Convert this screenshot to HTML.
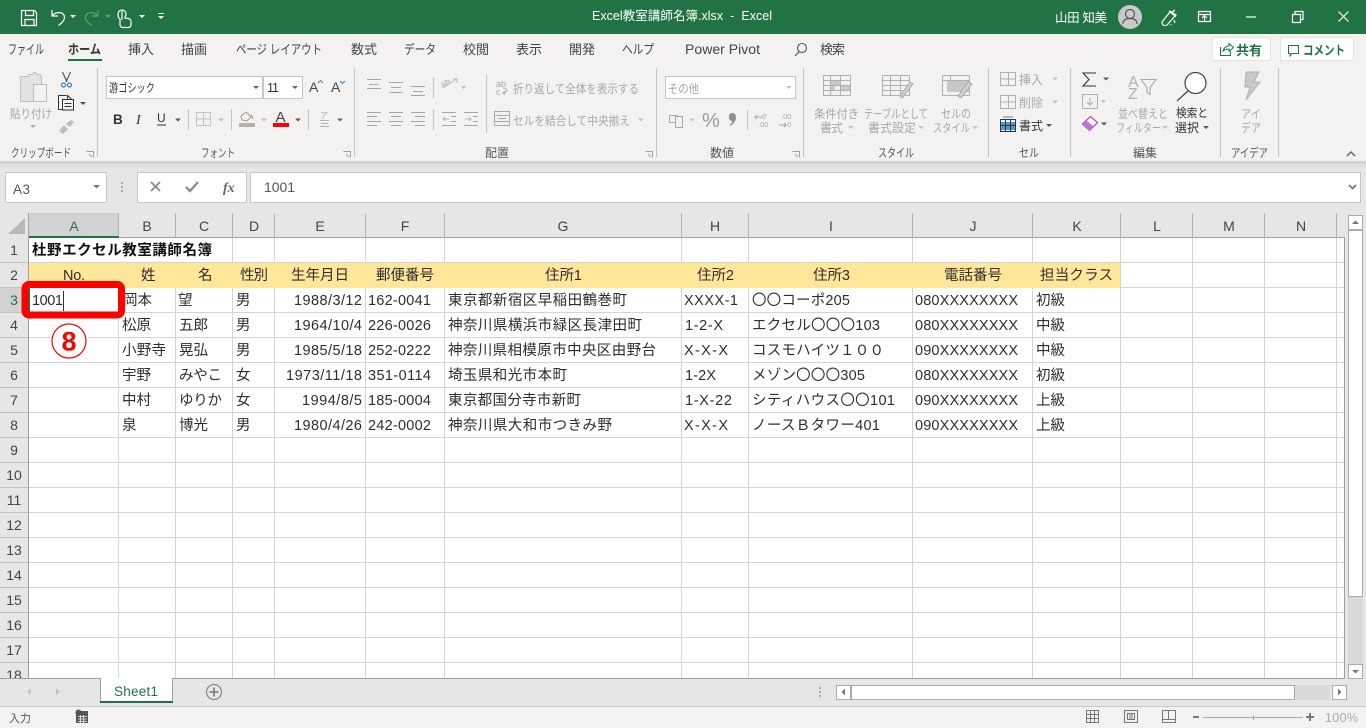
<!DOCTYPE html>
<html lang="ja"><head><meta charset="utf-8"><title>Excel</title>
<style>
html,body{margin:0;padding:0;width:1366px;height:728px;overflow:hidden;background:#fff}
svg{display:block;position:absolute;left:0;top:0}
text{font-family:"Liberation Sans","Noto Sans CJK JP",sans-serif;white-space:pre}
.c text,.c{font-size:14.5px;fill:#2e2e2e}
.t{font-size:13px;fill:#444}
.r{font-size:12px;fill:#a8a8a8}
.d{font-size:12px;fill:#444}
.g{font-size:12px;fill:#555}
.h{font-size:14px;fill:#444;text-anchor:middle}
.w{font-size:12.5px;fill:#fff}
.ln{stroke:#a6a6a6;stroke-width:1;fill:none}
.sep{stroke:#c4c4c4;stroke-width:1}
</style></head><body>
<svg width="1366" height="728" viewBox="0 0 1366 728" xmlns="http://www.w3.org/2000/svg">
<!-- backgrounds -->
<rect width="1366" height="728" fill="#e6e6e6"/>
<rect width="1366" height="34" fill="#217346"/>
<rect y="34" width="1366" height="128" fill="#f3f2f1"/>
<rect y="161" width="1366" height="3" fill="#d4d4d4"/>
<rect y="164" width="1366" height="3" fill="#e0e0e0"/>

<!-- title bar -->
<g fill="none" stroke="#fff" stroke-width="1.2">
<path d="M21.5 10.5h13l2 2v13h-15z"/><path d="M25.5 10.5v5h8v-5M25 25.500v-6h9v6"/>
<path d="M52 10v6h6M52.500 15.500c3-4 11-4 12 1 .6 3-2 6-6 9"/>
<path stroke="#5f9e7d" d="M98 10v6h-6M97.500 15.500c-3-4-11-4-12 1-.6 3 2 6 6 9"/>
<path d="M120 25v-6c-2-1-2-3-2-5a4 4 0 0 1 8 0c0 1 0 2-1 3l0 1 3 .5c2 .5 3 1 3 3v3c0 2-1 3-3 3h-5c-2 0-3-1-3-3z"/>
<path d="M122 11v9"/>
</g>
<g fill="#fff"><path d="M70 15h6l-3 3zM139 15h6l-3 3zM158 16h6l-3 3zM158 13h6v1h-6z"/></g>
<path d="M105 15h6l-3 3z" fill="#5f9e7d"/>
<text class="w" x="592" y="20" textLength="180">Excel教室講師名簿.xlsx  -  Excel</text>
<text class="w" x="1055" y="22" textLength="52">山田 知美</text>
<circle cx="1130" cy="17" r="12" fill="#c9c9c9"/>
<circle cx="1130" cy="14" r="4.500" fill="none" stroke="#555" stroke-width="1.2"/>
<path d="M1123 24c0-4 3-5.500 7-5.500s7 1.500 7 5.500" fill="none" stroke="#555" stroke-width="1.200"/>
<g fill="none" stroke="#fff" stroke-width="1.2">
<path d="M1162 22l8-10 5 4-8 9c-2 1-5 1-5-3zM1169 13l1-2 6 4-1 2M1172 12l3-2M1174 20l1 3M1171 24l0 1"/>
<path d="M1198.500 11.500h12v10h-12zM1198.500 14.500h12M1204.500 21v-5M1202 18l2.500-2.500 2.500 2.500"/>
<path d="M1246 17h10" />
<path d="M1292.500 14.500h8v8h-8zM1295 14v-2.500h8v8h-2.500"/>
<path d="M1338.500 11.500l10 10M1348.500 11.500l-10 10"/>
</g>

<!-- tabs -->
<text class="t" x="8" y="54" textLength="36" lengthAdjust="spacingAndGlyphs">ファイル</text>
<text class="t" x="68" y="54" textLength="33" lengthAdjust="spacingAndGlyphs" font-weight="bold" style="fill:#333">ホーム</text>
<rect x="68" y="59" width="34" height="2" fill="#217346"/>
<text class="t" x="128" y="54" textLength="26">挿入</text>
<text class="t" x="181" y="54" textLength="26">描画</text>
<text class="t" x="236" y="54" textLength="86" lengthAdjust="spacingAndGlyphs">ページ レイアウト</text>
<text class="t" x="351" y="54" textLength="26">数式</text>
<text class="t" x="404" y="54" textLength="32" lengthAdjust="spacingAndGlyphs">データ</text>
<text class="t" x="463" y="54" textLength="26">校閲</text>
<text class="t" x="516" y="54" textLength="26">表示</text>
<text class="t" x="569" y="54" textLength="26">開発</text>
<text class="t" x="622" y="54" textLength="32" lengthAdjust="spacingAndGlyphs">ヘルプ</text>
<text class="t" x="685" y="54" textLength="75" lengthAdjust="spacingAndGlyphs" style="font-size:13.5px">Power Pivot</text>
<circle cx="802" cy="48" r="4.500" fill="none" stroke="#555" stroke-width="1.1"/><path d="M799 52l-4 4" stroke="#555" stroke-width="1.200"/>
<text class="t" x="820" y="54" textLength="25">検索</text>
<rect x="1212.500" y="37.500" width="58" height="23" rx="1" fill="#fff" stroke="#e4e2e0"/>
<rect x="1280.500" y="37.500" width="73" height="23" rx="1" fill="#fff" stroke="#e4e2e0"/>
<path d="M1220.500 47v8.500h10v-4M1223 51c1-3 3-5 6-5v-2.500l4.500 4-4.500 4V49c-2 0-4 .5-6 2z" fill="none" stroke="#217346"/>
<text x="1236" y="55" font-size="13" font-weight="bold" fill="#217346" textLength="26">共有</text>
<path d="M1288.500 45.500h10v8h-6.500l-2 2.500v-2.500h-1.500z" fill="none" stroke="#217346"/>
<text x="1303" y="55" font-size="13" font-weight="bold" fill="#217346" textLength="42" lengthAdjust="spacingAndGlyphs">コメント</text>

<!-- group separators -->
<g class="sep"><path d="M97.500 68v89M354.500 68v89M656.500 68v89M803.500 68v89M988.500 68v89M1070.500 68v89M1220.500 68v89M1278.500 68v89"/></g>

<!-- group labels -->
<text class="g" x="11" y="157" textLength="60" lengthAdjust="spacingAndGlyphs">クリップボード</text>
<text class="g" x="201" y="157" textLength="34" lengthAdjust="spacingAndGlyphs">フォント</text>
<text class="g" x="485" y="157" textLength="24">配置</text>
<text class="g" x="710" y="157" textLength="24">数値</text>
<text class="g" x="878" y="157" textLength="36" lengthAdjust="spacingAndGlyphs">スタイル</text>
<text class="g" x="1019" y="157" textLength="20" lengthAdjust="spacingAndGlyphs">セル</text>
<text class="g" x="1133" y="157" textLength="24">編集</text>
<text class="g" x="1231" y="157" textLength="37" lengthAdjust="spacingAndGlyphs">アイデア</text>
<g fill="none" stroke="#a0a0a0"><path d="M86.500 151.500h7v6M89 154l3 3M343.500 151.500h7v6M346 154l3 3M645.500 151.500h7v6M648 154l3 3M792.500 151.500h7v6M795 154l3 3"/></g>
<path d="M1347 156l4-4 4 4" fill="none" stroke="#666" stroke-width="1.500"/>

<!-- clipboard -->
<path d="M20.500 76.500h8v-2h4l1-2h2l1 2h4v2h1v8h-3v17h-18z" fill="#e2e2e2" stroke="#c2c2c2"/>
<rect x="33.500" y="84.500" width="13" height="17" fill="#f3f2f1" stroke="#bcbcbc"/>
<text class="r" x="10" y="118" textLength="42" lengthAdjust="spacingAndGlyphs">貼り付け</text>
<path d="M30 125h6l-3 3z" fill="#aaa"/>
<g fill="none" stroke="#444"><path d="M62.500 72l4.500 10M70.500 72l-4.500 10"/></g>
<g fill="none" stroke="#2e86d0" stroke-width="1.200"><circle cx="63.500" cy="85" r="2"/><circle cx="69.500" cy="85" r="2"/></g>
<g fill="none" stroke="#333"><path d="M62 109.500h-3.500v-14h8"/><path d="M62.500 99.500h5l6 0v10.500h-11zM67.500 99.500v-4l5 4.500M64.500 103.500h7M64.500 106.500h7" /></g>
<path d="M80 102h6l-3 3z" fill="#555"/>
<path d="M59 131l5-6 4 4-5 5zM66 124l5-4 3 2-4 5z" fill="#bdbdbd"/>

<!-- font -->
<rect x="106.500" y="76.500" width="156" height="22" fill="#fff" stroke="#c6c6c6"/>
<rect x="263.500" y="76.500" width="39" height="22" fill="#fff" stroke="#c6c6c6"/>
<text x="109" y="92" font-size="12" fill="#333" textLength="46" lengthAdjust="spacingAndGlyphs">游ゴシック</text>
<text x="267" y="92" font-size="12.500" fill="#333" textLength="12">11</text>
<path d="M253 86h6l-3 3zM292 86h6l-3 3z" fill="#666"/>
<text x="309" y="92" font-size="14" fill="#444">A</text><path d="M318 83l2.500-2.500 2.500 2.500" fill="none" stroke="#2e86d0"/>
<text x="331" y="92" font-size="14" fill="#444">A</text><path d="M340 81l2.500 2.500 2.500-2.500" fill="none" stroke="#2e86d0"/>
<text x="113" y="124" font-size="13.500" font-weight="bold" fill="#333">B</text>
<text x="136" y="124" font-size="14" font-style="italic" fill="#333" style="font-family:'Liberation Serif',serif">I</text>
<text x="157" y="122" font-size="12" fill="#333">U</text><rect x="157" y="124.500" width="9" height="1" fill="#333"/>
<path d="M175 118.500h6l-3 3z" fill="#555"/>
<path class="sep" d="M188.500 109v21M231.500 109v21M308.500 109v21"/>
<g fill="none" stroke="#c4c4c4"><path d="M196.500 112.500h14v13h-14zM203.500 112.500v13M196.500 119h14"/></g>
<path d="M218 118.500h6l-3 3z" fill="#c0c0c0"/>
<path d="M241 116l5-4 5 5-4 4-5-1zM251 115c1 1 2 3 1.500 4" fill="none" stroke="#999"/>
<rect x="239" y="123" width="16" height="4" fill="#b4b0aa"/>
<path d="M261 118.500h6l-3 3z" fill="#c0c0c0"/>
<text x="275.500" y="122" font-size="15" fill="#444">A</text>
<rect x="273" y="123" width="16" height="4" fill="#f00"/>
<path d="M295 118.500h6l-3 3z" fill="#555"/>
<text x="320" y="118" font-size="8" fill="#b0b0b0">ア</text>
<g stroke="#b0b0b0"><path d="M320 120.500h9M321 123.500h7M320 126.500h9"/></g>
<path d="M337 118.500h6l-3 3z" fill="#666"/>

<!-- alignment -->
<g class="ln"><path d="M367 79.500h14M369 84.500h10M367 88.500h14M389 82.500h14M391 87.500h10M389 92.500h14M411 86.500h14M413 91.500h10M411 95.500h14"/>
<path d="M367 112.500h14M367 116.500h10M367 121.500h14M367 125.500h10M389 112.500h14M391 116.500h10M389 121.500h14M391 125.500h10M411 112.500h14M415 116.500h10M411 121.500h14M415 125.500h10"/>
<path d="M442 112.500h14M451 116.500h5M451 121.500h5M442 125.500h14M464 112.500h14M473 116.500h5M473 121.500h5M464 125.500h14"/></g>
<path d="M449 119h-6M445 117l-2 2 2 2M465 119h6M469 117l2 2-2 2" fill="none" stroke="#b8b8b8"/>
<path class="sep" d="M433.500 77v21M433.500 109v21M486.500 74v59"/>
<path d="M443 87l14-8M453 79h4v4" fill="none" stroke="#bbb"/><text x="441" y="86" font-size="9" fill="#aaa" transform="rotate(-30 446 84)">ab</text>
<path d="M461 86h5l-2.500 3z" fill="#bbb"/>
<text x="496" y="87" font-size="9" fill="#a8a8a8">ab</text><text x="496" y="95" font-size="9" fill="#a8a8a8">c</text><path d="M503 88c5 0 5 5 0 5M505 91l-2 2 2 2" fill="none" stroke="#aaa"/>
<text class="r" x="513" y="93" textLength="126" lengthAdjust="spacingAndGlyphs">折り返して全体を表示する</text>
<rect x="494.500" y="111.500" width="15" height="14" fill="none" stroke="#aaa"/><path d="M494 115.500h15M494 121.500h15M498 118.500h8" fill="none" stroke="#aaa"/>
<text class="r" x="513" y="125" textLength="117" lengthAdjust="spacingAndGlyphs">セルを結合して中央揃え</text>
<path d="M638 118.500h6l-3 3z" fill="#c4c4c4"/>

<!-- number -->
<rect x="665.500" y="76.500" width="130" height="22" fill="#fff" stroke="#c6c6c6"/>
<text class="r" x="668" y="93" textLength="31" lengthAdjust="spacingAndGlyphs">その他</text>
<path d="M786 86h6l-3 3z" fill="#c4c4c4"/>
<rect x="669.500" y="115.500" width="8" height="7" fill="none" stroke="#aaa"/><rect x="675.500" y="116.500" width="7" height="11" fill="#f3f2f1" stroke="#aaa"/>
<path d="M689 118.500h6l-3 3z" fill="#c4c4c4"/>
<text x="702" y="127" font-size="20" fill="#9a9a9a">%</text>
<path d="M732 113c2.500 0 4 1.500 4 4 0 4-2.500 7-6 9l-.5-.8c1.500-1 2.500-2.500 2.800-4.200-2 0-3.300-1.500-3.300-4s1-4 3-4z" fill="#8e8e8e"/>
<path class="sep" d="M747.500 110v20"/>
<text x="760" y="119" font-size="7.500" fill="#aaa">.0</text><text x="758" y="127" font-size="7.500" fill="#aaa">.00</text><path d="M762 117h-7M757 115l-2 2 2 2" fill="none" stroke="#aaa"/>
<text x="781" y="119" font-size="7.500" fill="#aaa">.00</text><text x="785" y="127" font-size="7.500" fill="#aaa">.0</text><path d="M779 125h7M784 123l2 2-2 2" fill="none" stroke="#aaa"/>

<!-- styles -->
<g stroke="#b0b0b0" fill="#f3f2f1"><rect x="823.500" y="75.500" width="27" height="20"/></g>
<path d="M830 80h11v5h-6v5h-5zM841 85h9v5h-9z" fill="#c8c8c8"/>
<path d="M823.500 80.500h27M823.500 85.500h27M823.500 90.500h27M830.500 75v21M840.500 75v21" fill="none" stroke="#b0b0b0"/>
<text class="r" x="814" y="118" textLength="45" lengthAdjust="spacingAndGlyphs">条件付き</text><text class="r" x="820" y="132" textLength="23">書式</text><path d="M848 126h6l-3 3z" fill="#c4c4c4"/>
<g fill="none" stroke="#b0b0b0"><rect x="882.500" y="75.500" width="27" height="20"/><path d="M882.500 80.500h27M882.500 85.500h27M882.500 90.500h27M890.500 75v21M900.500 75v21"/></g>
<path d="M900 96l10-14 3 2-11 14z" fill="#d0d0d0" stroke="#aaa"/>
<text class="r" x="864" y="118" textLength="64" lengthAdjust="spacingAndGlyphs">テーブルとして</text><text class="r" x="868" y="132" textLength="48">書式設定</text><path d="M918 126h6l-3 3z" fill="#c4c4c4"/>
<g fill="none" stroke="#b0b0b0"><rect x="942.500" y="75.500" width="27" height="20"/><path d="M942.500 80.500h27M950.500 75v6"/></g>
<rect x="947" y="81" width="22" height="11" fill="#c8c8c8"/>
<path d="M958 96l10-14 4 2-11 14z" fill="#d0d0d0" stroke="#aaa"/>
<text class="r" x="941" y="118" textLength="30" lengthAdjust="spacingAndGlyphs">セルの</text><text class="r" x="933" y="132" textLength="37" lengthAdjust="spacingAndGlyphs">スタイル</text><path d="M972 126h6l-3 3z" fill="#c4c4c4"/>

<!-- cells -->
<g fill="none" stroke="#b0b0b0"><rect x="1000.500" y="72.500" width="15" height="13"/><path d="M1008.500 72v14M1000 79h16"/><rect x="1000.500" y="95.500" width="15" height="13"/><path d="M1008.500 95v14M1000 102h16"/></g>
<text class="r" x="1019" y="84" textLength="24">挿入</text><text class="r" x="1019" y="107" textLength="24">削除</text>
<path d="M1052 77.500h6l-3 3zM1052 100.500h6l-3 3z" fill="#c4c4c4"/>
<rect x="1001" y="122" width="14" height="8" fill="#4a9ad8"/>
<g fill="none" stroke="#333"><rect x="1000.500" y="119.500" width="15" height="12"/><path d="M1000 125.500h16M1005.500 119v13M1010.500 119v13"/></g>
<path d="M1003 117h10" stroke="#2e86d0"/>
<text class="d" x="1019" y="130" textLength="24" style="fill:#333">書式</text>
<path d="M1046 124h6l-3 3z" fill="#555"/>

<!-- editing -->
<path d="M1096 73h-13l6 6.500-6 6.500h13" fill="none" stroke="#333" stroke-width="1.100"/>
<path d="M1103 77.500h6l-3 3z" fill="#555"/>
<rect x="1082.500" y="94.500" width="15" height="14" fill="none" stroke="#b0b0b0"/><path d="M1090 98v7M1087 102l3 3 3-3" fill="none" stroke="#aaa"/>
<path d="M1101 100h5l-2.500 3z" fill="#c4c4c4"/>
<path d="M1082.500 124l8-7.500 7 6-8 8z" fill="#fff" stroke="#a94bb8" stroke-width="1.200"/><path d="M1082.500 124l4-3.500 7 6-4 4.500z" fill="#c86cd6"/>
<path d="M1101 122.500h6l-3 3z" fill="#555"/>
<text x="1128" y="87" font-size="16" fill="#b0b0b0">A</text><text x="1128" y="99" font-size="16" fill="#b0b0b0">Z</text>
<path d="M1141 79.500h15l-6 8v7l-3-2v-5z" fill="none" stroke="#a8a8a8" stroke-width="1.100"/>
<text class="r" x="1118" y="118" textLength="50" lengthAdjust="spacingAndGlyphs">並べ替えと</text><text class="r" x="1116" y="132" textLength="45" lengthAdjust="spacingAndGlyphs">フィルター</text><path d="M1162 126h6l-3 3z" fill="#c4c4c4"/>
<circle cx="1195.500" cy="83" r="10.500" fill="#fff" stroke="#444" stroke-width="1.200"/><path d="M1188 91l-11 10" stroke="#444" stroke-width="1.200"/>
<text class="d" x="1176" y="117" textLength="32" lengthAdjust="spacingAndGlyphs" style="fill:#333">検索と</text><text class="d" x="1175" y="132" textLength="24" style="fill:#333">選択</text><path d="M1203 126h6l-3 3z" fill="#555"/>
<!-- ideas -->
<path d="M1246 72h13l-5 10h6l-14 18 4-13h-5z" fill="#c8c8c8" stroke="#b0b0b0"/>
<text class="r" x="1241" y="118" textLength="20" lengthAdjust="spacingAndGlyphs">アイ</text><text class="r" x="1241" y="132" textLength="20" lengthAdjust="spacingAndGlyphs">デア</text>

<!-- formula bar -->
<rect x="5.500" y="172.500" width="101" height="30" fill="#fff" stroke="#c6c6c6"/>
<text x="13" y="194" font-size="13.500" fill="#555" textLength="17">A3</text>
<path d="M93 185h7l-3.500 3.500z" fill="#777"/>
<g fill="#aaa"><rect x="121" y="182" width="2" height="2"/><rect x="121" y="186" width="2" height="2"/><rect x="121" y="190" width="2" height="2"/></g>
<rect x="137.500" y="172.500" width="109" height="30" fill="#fff" stroke="#c6c6c6"/>
<rect x="250.500" y="172.500" width="1110" height="30" fill="#fff" stroke="#c6c6c6"/>
<path d="M151 182l9 9M160 182l-9 9" stroke="#888" stroke-width="1.800" fill="none"/>
<path d="M186 187l4 4 8-9" stroke="#888" stroke-width="2.200" fill="none"/>
<text x="223" y="192" font-size="14" font-style="italic" font-weight="bold" fill="#666" style="font-family:'Liberation Serif',serif">fx</text>
<text x="264" y="192" font-size="14" fill="#555" textLength="31">1001</text>
<path d="M1349 185l3.500 3.500 3.500-3.500" fill="none" stroke="#777" stroke-width="1.800"/>

<!-- sheet -->
<rect x="0" y="213" width="1345" height="25" fill="#e6e6e6"/>
<rect x="29" y="238" width="1315" height="440" fill="#fff"/>
<rect x="0" y="238" width="29" height="440" fill="#e6e6e6"/>
<rect x="29" y="213" width="90" height="24" fill="#d2d2d2"/>
<rect x="0" y="288" width="28" height="25" fill="#d2d2d2"/>
<path d="M8 234l17-16v16z" fill="#b8b8b8"/>
<g stroke="#d4d4d4" fill="none">
<path d="M29 262.500H1344M29 287.500H1344M29 312.500H1344M29 337.500H1344M29 362.500H1344M29 387.500H1344M29 412.500H1344M29 437.500H1344M29 462.500H1344M29 487.500H1344M29 512.500H1344M29 537.500H1344M29 562.500H1344M29 587.500H1344M29 612.500H1344M29 637.500H1344M29 662.500H1344"/>
<path d="M232.500 238V263M274.500 238V263M365.500 238V263M444.500 238V263M681.500 238V263M748.500 238V263M912.500 238V263M1032.500 238V263M1120.500 238V678M1192.500 238V678M1264.500 238V678M1336.500 238V678"/>
<path d="M118.500 287V678M175.500 287V678M232.500 287V678M274.500 287V678M365.500 287V678M444.500 287V678M681.500 287V678M748.500 287V678M912.500 287V678M1032.500 287V678"/>
</g>
<rect x="29" y="263" width="1091" height="25" fill="#ffe699"/>
<g stroke="#c0c0c0" fill="none"><path d="M0 262.500h28M0 287.500h28M0 312.500h28M0 337.500h28M0 362.500h28M0 387.500h28M0 412.500h28M0 437.500h28M0 462.500h28M0 487.500h28M0 512.500h28M0 537.500h28M0 562.500h28M0 587.500h28M0 612.500h28M0 637.500h28M0 662.500h28"/></g>
<g stroke="#b4b4b4" fill="none"><path d="M118.500 213v24M175.500 213v24M232.500 213v24M274.500 213v24M365.500 213v24M444.500 213v24M681.500 213v24M748.500 213v24M912.500 213v24M1032.500 213v24M1120.500 213v24M1192.500 213v24M1264.500 213v24M1336.500 213v24"/></g>
<path d="M28 237.500H1345" stroke="#a0a0a0"/>
<path d="M28.500 213V678" stroke="#a0a0a0"/>
<path d="M1344.500 237V678" stroke="#a0a0a0"/>
<rect x="29" y="236" width="90" height="2" fill="#217346"/>
<rect x="28" y="288" width="2" height="25" fill="#217346"/>

<g class="h">
<text x="74" y="231" style="fill:#217346">A</text><text x="147" y="231">B</text><text x="204" y="231">C</text><text x="254" y="231">D</text><text x="320" y="231">E</text><text x="405" y="231">F</text><text x="563" y="231">G</text><text x="715" y="231">H</text><text x="831" y="231">I</text><text x="973" y="231">J</text><text x="1077" y="231">K</text><text x="1157" y="231">L</text><text x="1229" y="231">M</text><text x="1301" y="231">N</text>
</g>
<g class="h">
<text x="14" y="255">1</text><text x="14" y="280">2</text><text x="14" y="305" style="fill:#217346">3</text><text x="14" y="330">4</text><text x="14" y="355">5</text><text x="14" y="380">6</text><text x="14" y="405">7</text><text x="14" y="430">8</text><text x="14" y="455">9</text><text x="14" y="480">10</text><text x="14" y="505">11</text><text x="14" y="530">12</text><text x="14" y="555">13</text><text x="14" y="580">14</text><text x="14" y="605">15</text><text x="14" y="630">16</text><text x="14" y="655">17</text><text x="14" y="680">18</text>
</g>

<g class="c">
<text x="32" y="255" font-weight="bold" textLength="180" style="fill:#111">杜野エクセル教室講師名簿</text>
<text x="63" y="280" textLength="22">No.</text><text x="141" y="280" textLength="14">姓</text><text x="198" y="280" textLength="14">名</text><text x="240" y="280" textLength="28">性別</text><text x="291" y="280" textLength="58">生年月日</text><text x="376" y="280" textLength="58">郵便番号</text><text x="545" y="280" textLength="37">住所1</text><text x="697" y="280" textLength="37">住所2</text><text x="813" y="280" textLength="37">住所3</text><text x="944" y="280" textLength="58">電話番号</text><text x="1040" y="280" textLength="73">担当クラス</text>

<text x="123" y="305" textLength="29">岡本</text><text x="178" y="305" textLength="15">望</text><text x="236" y="305" textLength="14">男</text><text x="294" y="305" textLength="68">1988/3/12</text><text x="368" y="305" textLength="63">162-0041</text><text x="448" y="305" textLength="179">東京都新宿区早稲田鶴巻町</text><text x="684" y="305" textLength="54">XXXX-1</text><text x="752" y="305" textLength="98">〇〇コーポ205</text><text x="915" y="305" textLength="103">080XXXXXXXX</text><text x="1036" y="305" textLength="29">初級</text>

<text x="122" y="330" textLength="29">松原</text><text x="179" y="330" textLength="29">五郎</text><text x="236" y="330" textLength="14">男</text><text x="294" y="330" textLength="68">1964/10/4</text><text x="368" y="330" textLength="63">226-0026</text><text x="448" y="330" textLength="194">神奈川県横浜市緑区長津田町</text><text x="685" y="330" textLength="38">1-2-X</text><text x="752" y="330" textLength="128">エクセル〇〇〇103</text><text x="915" y="330" textLength="103">080XXXXXXXX</text><text x="1036" y="330" textLength="29">中級</text>

<text x="122" y="355" textLength="44">小野寺</text><text x="179" y="355" textLength="29">晃弘</text><text x="236" y="355" textLength="14">男</text><text x="294" y="355" textLength="68">1985/5/18</text><text x="368" y="355" textLength="63">252-0222</text><text x="448" y="355" textLength="208">神奈川県相模原市中央区由野台</text><text x="684" y="355" textLength="44">X-X-X</text><text x="752" y="355" textLength="132">コスモハイツ１００</text><text x="915" y="355" textLength="103">090XXXXXXXX</text><text x="1036" y="355" textLength="29">中級</text>

<text x="122" y="380" textLength="29">宇野</text><text x="179" y="380" textLength="43">みやこ</text><text x="236" y="380" textLength="14">女</text><text x="286" y="380" textLength="76">1973/11/18</text><text x="368" y="380" textLength="63">351-0114</text><text x="448" y="380" textLength="119">埼玉県和光市本町</text><text x="685" y="380" textLength="31">1-2X</text><text x="752" y="380" textLength="113">メゾン〇〇〇305</text><text x="915" y="380" textLength="103">080XXXXXXXX</text><text x="1036" y="380" textLength="29">初級</text>

<text x="122" y="405" textLength="29">中村</text><text x="179" y="405" textLength="43">ゆりか</text><text x="236" y="405" textLength="14">女</text><text x="302" y="405" textLength="60">1994/8/5</text><text x="368" y="405" textLength="63">185-0004</text><text x="448" y="405" textLength="133">東京都国分寺市新町</text><text x="685" y="405" textLength="47">1-X-22</text><text x="752" y="405" textLength="143">シティハウス〇〇101</text><text x="915" y="405" textLength="103">090XXXXXXXX</text><text x="1036" y="405" textLength="29">上級</text>

<text x="122" y="430" textLength="14">泉</text><text x="179" y="430" textLength="29">博光</text><text x="236" y="430" textLength="14">男</text><text x="294" y="430" textLength="68">1980/4/26</text><text x="368" y="430" textLength="63">242-0002</text><text x="448" y="430" textLength="164">神奈川県大和市つきみ野</text><text x="684" y="430" textLength="44">X-X-X</text><text x="752" y="430" textLength="128">ノースＢタワー401</text><text x="915" y="430" textLength="103">090XXXXXXXX</text><text x="1036" y="430" textLength="29">上級</text>

<text x="32" y="305" textLength="31">1001</text>
</g>
<path d="M63.500 291v20" stroke="#333"/>

<!-- annotation -->
<rect x="25" y="284.500" width="96.500" height="30.500" rx="4" fill="none" stroke="#ff0000" stroke-width="7"/>
<circle cx="69" cy="341" r="19" fill="#fff" opacity=".9"/>
<circle cx="69" cy="341" r="17" fill="#fff" stroke="#f00" stroke-width="1.200"/>
<text x="69" y="350.500" font-size="27" font-weight="bold" fill="#f00" text-anchor="middle">8</text>

<!-- scrollbars -->
<rect x="1345" y="213" width="21" height="493" fill="#e6e6e6"/>
<rect x="1348" y="215" width="15" height="450" fill="#dadada"/>
<rect x="1348.500" y="215.500" width="14" height="14" fill="#fff" stroke="#ababab"/>
<path d="M1352 224h7l-3.500-3.500z" fill="#777"/>
<rect x="1348.500" y="230.500" width="14" height="366" fill="#fff" stroke="#ababab"/>
<rect x="1348.500" y="664.500" width="14" height="14" fill="#fff" stroke="#ababab"/>
<path d="M1352 670h7l-3.500 3.500z" fill="#777"/>

<!-- tab bar -->
<rect x="0" y="678" width="1345" height="28" fill="#e6e6e6"/>
<path d="M0 678.500H1345" stroke="#a0a0a0"/>
<path d="M100.500 678.500V702" stroke="#a0a0a0"/><path d="M172.500 678.500V702" stroke="#a0a0a0"/>
<rect x="101" y="678" width="71" height="24" fill="#fff"/>
<rect x="100" y="701" width="73" height="2" fill="#217346"/>
<text x="114" y="696" font-size="13.500" fill="#217346" textLength="44">Sheet1</text>
<path d="M31 688l-4 3.500 4 3.500zM56 688l4 3.500-4 3.500z" fill="#c4c4c4"/>
<circle cx="214" cy="692" r="7.500" fill="none" stroke="#888" stroke-width="1.200"/><path d="M209.500 692h9M214 687.500v9" stroke="#777" stroke-width="1.500"/>
<g fill="#aaa"><rect x="819" y="687" width="2" height="2"/><rect x="819" y="691" width="2" height="2"/><rect x="819" y="695" width="2" height="2"/></g>
<rect x="851" y="685" width="479" height="15" fill="#dadada"/>
<rect x="836.500" y="685.500" width="14" height="14" fill="#fff" stroke="#ababab"/>
<path d="M845 688.500v7l-3.500-3.500z" fill="#777"/>
<rect x="851.500" y="685.500" width="443" height="14" fill="#fff" stroke="#ababab"/>
<rect x="1332.500" y="685.500" width="14" height="14" fill="#fff" stroke="#ababab"/>
<path d="M1338 688.500v7l3.500-3.500z" fill="#777"/>

<!-- status bar -->
<rect x="0" y="706" width="1366" height="22" fill="#f3f2f1"/>
<path d="M0 706.500H1366" stroke="#c8c8c8"/>
<text x="9" y="722" font-size="11" fill="#555" textLength="22">入力</text>
<circle cx="78.500" cy="712.500" r="3" fill="#555"/>
<rect x="76" y="714" width="12" height="9" fill="#555"/><path d="M81 711h7v3h-7z" fill="#555"/>
<path d="M78 716.500h9M78 719h9M78 721.500h9M80.500 715v8M83.500 715v8" stroke="#f3f2f1" stroke-width=".8"/>
<g fill="none" stroke="#777">
<path d="M1086.500 710.500h12v12h-12zM1090.500 710.500v12M1094.500 710.500v12M1086.500 714.500h12M1086.500 718.500h12"/>
<path d="M1124.500 710.500h13v12h-13zM1127.500 713.500h7v6h-7zM1129 715h4M1129 717h4M1129 719h4"/>
<path d="M1162.500 710.500h13v12h-13zM1162.500 719.500h13M1168.500 710.500v9"/>
</g>
<path d="M1193 717h6" stroke="#777" stroke-width="2"/>
<path d="M1203 717.500h100" stroke="#aaa"/><path d="M1253.500 715v5" stroke="#aaa"/>
<path d="M1306 717h8M1310 713v8" stroke="#777" stroke-width="2"/>
<text x="1325" y="722" font-size="12.500" fill="#aaa" textLength="33">100%</text>
</svg>
</body></html>
